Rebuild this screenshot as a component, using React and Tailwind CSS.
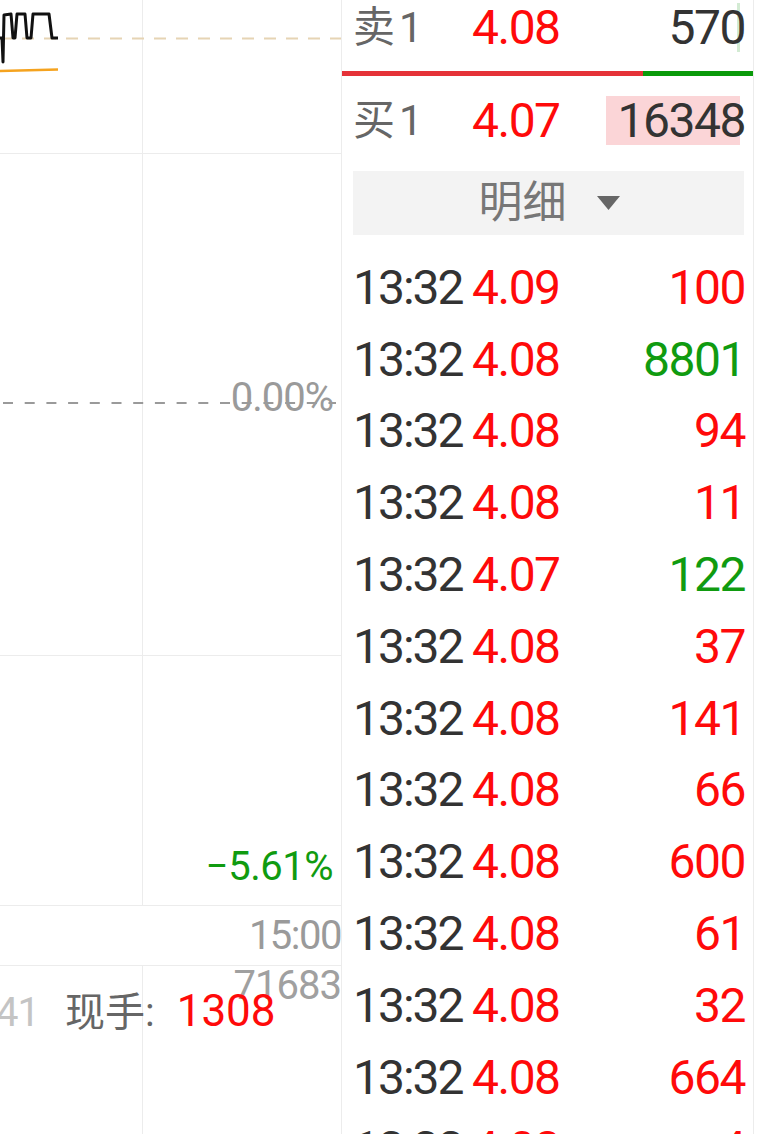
const trades = [
  ["4.09", "100", "r"],
  ["4.08", "8801", "g"],
  ["4.08", "94", "r"],
  ["4.08", "11", "r"],
  ["4.07", "122", "g"],
  ["4.08", "37", "r"],
  ["4.08", "141", "r"],
  ["4.08", "66", "r"],
  ["4.08", "600", "r"],
  ["4.08", "61", "r"],
  ["4.08", "32", "r"],
  ["4.08", "664", "r"],
  ["4.08", "4", "r"],
];

const num = "text-[48px] leading-none tracking-[-1.5px]";

function ChartLines() {
  return (
    <svg className="absolute inset-0 pointer-events-none" width="341" height="905">
      <line x1="0" y1="38.5" x2="341" y2="38.5" stroke="#e6d4b4" strokeWidth="2" strokeDasharray="12 10" />
      <line x1="3" y1="403" x2="336" y2="403" stroke="#9a9a9a" strokeWidth="2" strokeDasharray="10 11.7" />
      <path
        d="M0 38 L2 38 L3 62 L4 15 L11 14 L13 38 L15 38 L17 14 L25 14 L27 38 L31 38 L33 14 L49 14 L52 38 L58 38"
        fill="none"
        stroke="#111"
        strokeWidth="3"
        strokeLinejoin="round"
      />
      <path d="M0 71 L58 69.5" stroke="#f5a31f" strokeWidth="2.5" fill="none" />
    </svg>
  );
}

function LeftPanel() {
  return (
    <div className="relative w-[342px] shrink-0 border-r border-[#ececec] flex flex-col">
      <div className="relative h-[906px] shrink-0 flex flex-col">
        <div className="h-[154px] shrink-0 flex border-b border-[#ececec]">
          <div className="w-[143px] border-r border-[#ececec]" />
          <div className="flex-1" />
        </div>
        <div className="h-[502px] shrink-0 flex border-b border-[#ececec]">
          <div className="w-[143px] border-r border-[#ececec]" />
          <div className="flex-1 flex items-center justify-end pr-[8px]">
            <span className="text-[40px] leading-none tracking-[-1px] text-[#9a9a9a] -mt-[14px]">0.00%</span>
          </div>
        </div>
        <div className="h-[250px] shrink-0 flex border-b border-[#ececec]">
          <div className="w-[143px] border-r border-[#ececec]" />
          <div className="flex-1 flex items-end justify-end pr-[8px] pb-[18px]">
            <span className="text-[40px] leading-none tracking-[-0.5px] text-[#109b10]">−5.61%</span>
          </div>
        </div>
        <ChartLines />
      </div>
      <div className="h-[60px] shrink-0 flex items-center justify-end border-b border-[#ececec]">
        <span className="text-[40px] leading-none tracking-[-1.5px] text-[#9a9a9a]">15:00</span>
      </div>
      <div className="flex-1 flex">
        <div className="w-[143px] border-r border-[#ececec]" />
        <div className="flex-1" />
      </div>
      <div className="absolute top-[966px] left-0 w-[341px] flex flex-col">
        <div className="flex justify-end">
          <span className="text-[40px] leading-none tracking-[-1px] text-[#a0a0a0]">71683</span>
        </div>
        <div className="flex items-baseline -mt-[17px]">
          <span className="text-[40px] leading-none text-[#c4c4c4] -ml-[4px] tracking-[-1px]">41</span>
          <span className="ml-[26px] text-[40px] leading-none text-[#666]">现手:</span>
          <span className="ml-[22px] text-[44px] leading-none text-[#ff0a0a]">1308</span>
        </div>
      </div>
    </div>
  );
}

function VolumeCell({ value, bar, barColor, color }) {
  return (
    <div className="relative h-[49px] flex items-center justify-end pr-[8px]">
      <div className={"absolute right-[13px] top-0 h-full " + barColor} style={{ width: bar }} />
      <span className={"relative " + num + " " + color}>{value}</span>
    </div>
  );
}

function RightPanel() {
  return (
    <div className="w-[412px] shrink-0 border-r border-[#ececec] flex flex-col">
      <div className="mt-[3px] shrink-0 grid grid-cols-[119px_1fr_auto] items-center pl-[11px]">
        <div className="text-[42px] leading-none text-[#666]">
          卖<span className="ml-[4px]">1</span>
        </div>
        <span className={num + " text-[#ff0a0a]"}>4.08</span>
        <VolumeCell value="570" bar="3px" barColor="bg-[#d3ebd3]" color="text-[#333]" />
      </div>
      <div className="mt-[19px] h-[5px] shrink-0 flex">
        <div className="w-[301px] bg-[#e53238]" />
        <div className="flex-1 bg-[#0a9a0a]" />
      </div>
      <div className="mt-[20px] shrink-0 grid grid-cols-[119px_1fr_auto] items-center pl-[11px]">
        <div className="text-[42px] leading-none text-[#666]">
          买<span className="ml-[4px]">1</span>
        </div>
        <span className={num + " text-[#ff0a0a]"}>4.07</span>
        <VolumeCell value="16348" bar="134px" barColor="bg-[#fbd5d7]" color="text-[#333]" />
      </div>
      <div className="mt-[26px] ml-[11px] mr-[9px] h-[64px] shrink-0 bg-[#f3f3f3] flex items-center justify-center gap-[29px] pl-[2px]">
        <span className="text-[44px] leading-none text-[#777]">明细</span>
        <svg width="25" height="16" viewBox="0 0 25 16">
          <path d="M1 1 L24 1 L12.5 15 Z" fill="#666" />
        </svg>
      </div>
      <div className="mt-[17px] shrink-0 flex flex-col">
        {trades.map(([price, vol, dir], i) => (
          <div key={i} className="h-[71.8px] shrink-0 flex items-center pl-[11px] pr-[8px]">
            <span className={num + " w-[119px] tracking-[-2px] text-[#333]"}>13:32</span>
            <span className={num + " text-[#ff0a0a]"}>{price}</span>
            <span className={num + " ml-auto " + (dir === "g" ? "text-[#109b10]" : "text-[#ff0a0a]")}>{vol}</span>
          </div>
        ))}
      </div>
    </div>
  );
}

export default function App() {
  return (
    <div className="relative w-[768px] h-[1134px] overflow-hidden bg-white flex font-[Roboto,'Noto_Sans_CJK_SC',sans-serif]">
      <LeftPanel />
      <RightPanel />
      <div className="flex-1" />
    </div>
  );
}
